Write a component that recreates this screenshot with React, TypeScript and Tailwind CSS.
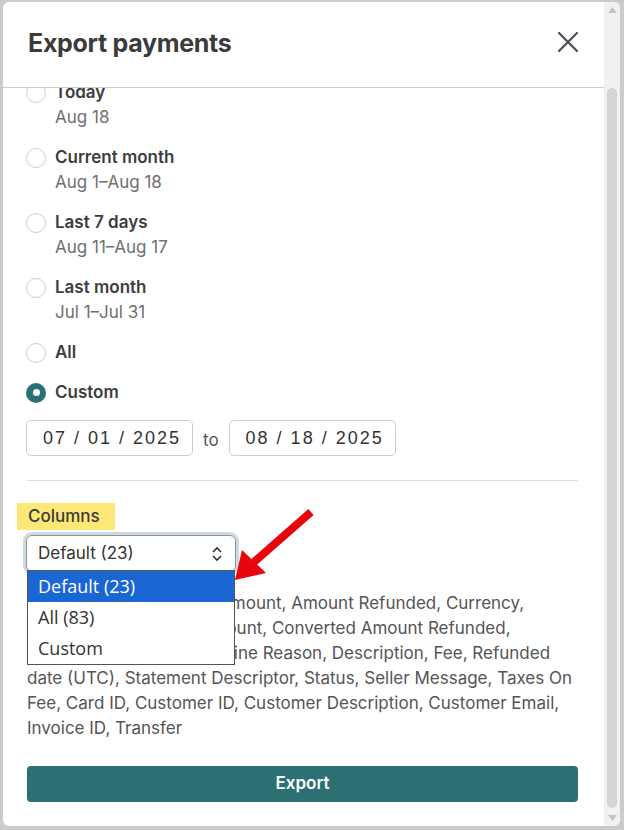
import { useLayoutEffect, useRef } from 'react';

interface RangeOption {
  id: string;
  label: string;
  dates?: string;
  checked?: boolean;
}

const ranges: RangeOption[] = [
  { id: 'today', label: 'Today', dates: 'Aug 18' },
  { id: 'current', label: 'Current month', dates: 'Aug 1–Aug 18' },
  { id: 'last7', label: 'Last 7 days', dates: 'Aug 11–Aug 17' },
  { id: 'lastmonth', label: 'Last month', dates: 'Jul 1–Jul 31' },
  { id: 'all', label: 'All' },
  { id: 'custom', label: 'Custom', checked: true },
];

const columnLines = [
  'ID, Created date (UTC), Amount, Amount Refunded, Currency,',
  'Captured, Converted Amount, Converted Amount Refunded,',
  'Tax Rates, Currency, Decline Reason, Description, Fee, Refunded',
  'date (UTC), Statement Descriptor, Status, Seller Message, Taxes On',
  'Fee, Card ID, Customer ID, Customer Description, Customer Email,',
  'Invoice ID, Transfer',
];

const columnChoices = ['Default (23)', 'All (83)', 'Custom'];

function Radio({ checked }: { checked?: boolean }) {
  if (checked) {
    return (
      <span className="flex h-[20px] w-[20px] shrink-0 items-center justify-center rounded-full bg-[#2d7074]">
        <span className="h-[7px] w-[7px] rounded-full bg-white" />
      </span>
    );
  }
  return <span className="h-[20px] w-[20px] shrink-0 rounded-full border border-[#cfcfcf] bg-white" />;
}

function DateBox({ value }: { value: string }) {
  return (
    <div className="flex h-[36px] w-[167px] items-center rounded-[5px] border border-[#cccccc] pl-[16px] font-['Liberation_Sans',sans-serif] text-[18px] tracking-[2px] text-[#333]">
      {value}
    </div>
  );
}

export default function App() {
  const bodyRef = useRef<HTMLDivElement>(null);

  // body is scrolled a little, so the first option sits under the header
  useLayoutEffect(() => {
    if (bodyRef.current) bodyRef.current.scrollTop = 24;
  }, []);

  return (
    <div className="relative h-[830px] w-[624px] overflow-hidden bg-[#c9ccc8] pb-[4px] pl-[3px] pr-[4px] pt-[2px] font-['Inter',sans-serif]">
      <div className="flex h-full overflow-hidden rounded-[6px] bg-white">
        {/* Main column */}
        <div className="flex min-w-0 flex-1 flex-col">
          {/* Header */}
          <div className="flex h-[86px] shrink-0 items-center justify-between border-b border-[#cccccc] pl-[25px] pr-[25px]">
            <h2 className="pb-[2px] text-[25px] font-bold tracking-[-0.3px] text-[#3b3b3b]">Export payments</h2>
            <svg width="22" height="22" viewBox="0 0 22 22" className="mb-[6px]">
              <path d="M2 2 L20 20 M20 2 L2 20" stroke="#4b4e5a" strokeWidth="2.2" strokeLinecap="round" />
            </svg>
          </div>

          {/* Body */}
          <div ref={bodyRef} className="relative flex-1 overflow-hidden">
            <div className="flex flex-col pb-[24px] pl-[24px] pr-[26px] pt-[16px]">
              <div className="flex flex-col gap-[15px]">
                {ranges.map((r) => (
                  <div key={r.id} className="-ml-[1px] flex items-start gap-[9px]">
                    <div className="flex h-[25px] items-center">
                      <Radio checked={r.checked} />
                    </div>
                    <div className="flex flex-col text-[17px] leading-[25px]">
                      <span className="font-semibold text-[#3d3d3d]">{r.label}</span>
                      {r.dates && <span className="text-[#6f6f6f]">{r.dates}</span>}
                    </div>
                  </div>
                ))}
              </div>

              {/* Custom range */}
              <div className="-ml-[1px] mt-[15px] flex items-center gap-[10px]">
                <DateBox value="07 / 01 / 2025" />
                <span className="pt-[6px] text-[17px] text-[#555]">to</span>
                <DateBox value="08 / 18 / 2025" />
              </div>

              <div className="mt-[24px] border-t border-[#dddddd]" />

              {/* Columns */}
              <div className="mt-[22px] flex">
                <span className="-ml-[10px] flex h-[27px] items-center bg-[#fde877] pl-[11px] pr-[15px] text-[17px] font-medium text-[#3b3b3b]">
                  Columns
                </span>
              </div>

              <div className="relative -ml-[1px] mt-[5px] w-[210px]">
                <div className="flex h-[37px] items-center justify-between rounded-[6px] border border-[#8a9499] pl-[11px] pr-[12px] text-[17px] text-[#333] shadow-[0_0_0_3px_#cfdae0]">
                  <span>Default (23)</span>
                  <svg width="12" height="16" viewBox="0 0 12 16">
                    <path d="M2 6 L6 2 L10 6 M2 10 L6 14 L10 10" stroke="#333" strokeWidth="1.6" fill="none" />
                  </svg>
                </div>

                {/* Open list */}
                <div className="absolute left-[1px] top-[35px] z-10 w-[208px] border border-[#555] bg-white font-['Open_Sans',sans-serif] text-[18px] text-[#333]">
                  {columnChoices.map((c, i) => (
                    <div
                      key={c}
                      className={`flex h-[31px] items-center pl-[10px] ${i === 0 ? 'bg-[#1a66d2] text-white' : ''}`}
                    >
                      {c}
                    </div>
                  ))}
                </div>
              </div>

              <div className="mt-[19px] flex flex-col text-[17px] leading-[25px] text-[#555]">
                {columnLines.map((line) => (
                  <span key={line} className="whitespace-nowrap">
                    {line}
                  </span>
                ))}
              </div>

              <button className="mt-[25px] flex h-[36px] items-center justify-center rounded-[4px] bg-[#2d7074] text-[17px] font-semibold text-white">
                Export
              </button>
            </div>
          </div>
        </div>

        {/* Scrollbar */}
        <div className="flex w-[16px] shrink-0 flex-col items-center bg-[#f1f1f1]">
          <div className="flex h-[16px] items-center justify-center">
            <svg width="9" height="6" viewBox="0 0 9 6">
              <path d="M0 6 L4.5 0 L9 6 Z" fill="#c3c3c3" />
            </svg>
          </div>
          <div className="mt-[70px] w-[10px] flex-1 rounded-[5px] bg-[#d4d4d4]" />
          <div className="mt-[2px] flex h-[16px] items-center justify-center">
            <svg width="9" height="6" viewBox="0 0 9 6">
              <path d="M0 0 L4.5 6 L9 0 Z" fill="#c3c3c3" />
            </svg>
          </div>
        </div>
      </div>

      {/* Red callout arrow */}
      <svg className="pointer-events-none absolute inset-0" width="624" height="830" viewBox="0 0 624 830">
        <path d="M311 512 L254 562" stroke="#e8040c" strokeWidth="8" />
        <path d="M235 580 L242 550 L266 573 Z" fill="#e8040c" />
      </svg>
    </div>
  );
}
